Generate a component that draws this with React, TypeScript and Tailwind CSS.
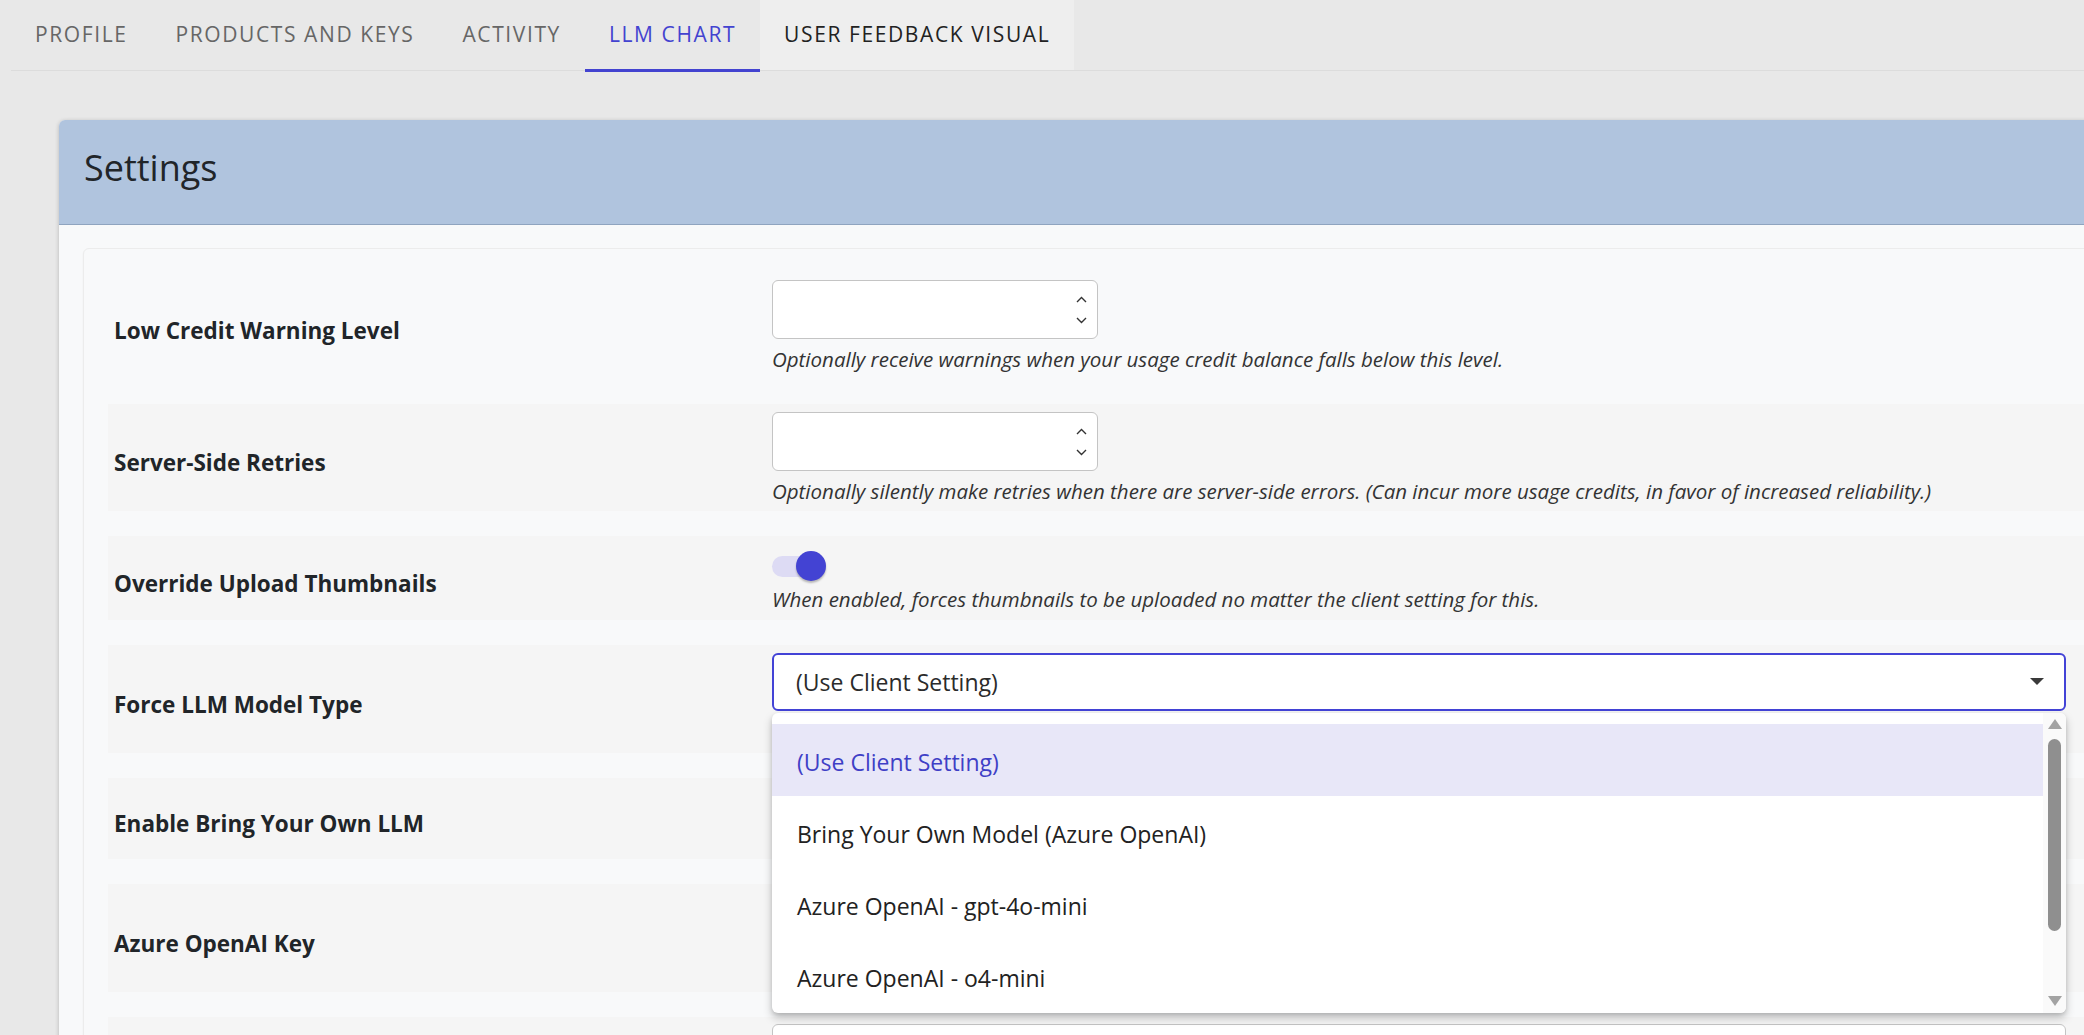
import React from "react";

const TABS = ["Profile", "Products and Keys", "Activity", "LLM Chart", "User Feedback Visual"];
const ACTIVE_TAB = "LLM Chart";
const HOVER_TAB = "User Feedback Visual";

const MODEL_OPTIONS = [
  "(Use Client Setting)",
  "Bring Your Own Model (Azure OpenAI)",
  "Azure OpenAI - gpt-4o-mini",
  "Azure OpenAI - o4-mini",
];

function Spinner() {
  return (
    <div className="absolute right-[10px] top-0 flex h-full flex-col items-center justify-center gap-[14px]">
      <svg width="11" height="7" viewBox="0 0 11 7" fill="none">
        <polyline points="1,6 5.5,1.5 10,6" stroke="#333" strokeWidth="1.4" />
      </svg>
      <svg width="11" height="7" viewBox="0 0 11 7" fill="none">
        <polyline points="1,1 5.5,5.5 10,1" stroke="#333" strokeWidth="1.4" />
      </svg>
    </div>
  );
}

function NumberInput() {
  return (
    <div className="relative h-[59px] w-[326px] rounded-[6px] border border-[#c4c4c4] bg-white">
      <Spinner />
    </div>
  );
}

function Toggle() {
  return (
    <div className="relative h-[30px] w-[54px]">
      <div className="absolute left-0 top-[4.5px] h-[21px] w-[51px] rounded-full bg-[#dddbf4]" />
      <div className="absolute right-0 top-0 size-[30px] rounded-full bg-[#4343d3] shadow-[0_2px_2px_rgba(0,0,0,0.25)]" />
    </div>
  );
}

function Helper({ children, className = "" }: { children: React.ReactNode; className?: string }) {
  return (
    <p className={`text-[20.5px] italic leading-[27px] text-[#333] ${className}`}>{children}</p>
  );
}

function Row({
  label,
  height,
  shaded = true,
  children,
}: {
  label: string;
  height: string;
  shaded?: boolean;
  children?: React.ReactNode;
}) {
  return (
    <div className={`flex ${height} ${shaded ? "bg-[#f5f5f5]" : ""}`}>
      <div className="flex w-[664px] shrink-0 items-center pl-[6px] pt-[11px] text-[22.5px] font-bold text-[#212529]">
        {label}
      </div>
      <div className="w-[1294px] shrink-0">{children}</div>
    </div>
  );
}

function ModelSelect() {
  return (
    <div className="relative">
      <div className="flex h-[58px] items-center rounded-[6px] border-2 border-[#4343d6] bg-white pl-[22px] text-[23px] text-[#2b2b2b]">
        (Use Client Setting)
        <svg className="absolute right-[22px] top-[25px]" width="14" height="7" viewBox="0 0 14 7">
          <polygon points="0,0 14,0 7,7" fill="#3a3a3a" />
        </svg>
      </div>

      <div className="absolute left-0 top-[60px] z-10 flex h-[300px] w-full overflow-hidden rounded-[6px] bg-white shadow-[0_5px_10px_rgba(0,0,0,0.22),0_2px_4px_rgba(0,0,0,0.12)]">
        <ul className="flex-1 pt-[11px]">
          {MODEL_OPTIONS.map((option, i) => (
            <li
              key={option}
              className={`flex h-[72px] items-center pl-[25px] pt-[4px] text-[23px] ${
                i === 0 ? "bg-[#e8e7f8] text-[#3f3fc6]" : "text-[#222]"
              }`}
            >
              {option}
            </li>
          ))}
        </ul>
        <div className="flex w-[23px] flex-col items-center bg-[#fafafa] pt-[6px]">
          <svg width="14" height="10" viewBox="0 0 14 10">
            <polygon points="7,0 14,10 0,10" fill="#a3a3a3" />
          </svg>
          <div className="mt-[10px] h-[192px] w-[13px] rounded-full bg-[#8f8f8f]" />
          <svg className="mt-[65px]" width="14" height="10" viewBox="0 0 14 10">
            <polygon points="0,0 14,0 7,10" fill="#a3a3a3" />
          </svg>
        </div>
      </div>
    </div>
  );
}

export default function App() {
  return (
    <div className="h-[1035px] w-[2084px] overflow-hidden bg-[#e8e8e8] font-['Open_Sans','Noto_Sans',sans-serif]">
      <nav className="ml-[11px] flex h-[71px] border-b border-[#dcdcdc]">
        {TABS.map((tab) => (
          <div
            key={tab}
            className={`relative flex h-[70px] items-center px-[24px] text-[21px] font-medium uppercase tracking-[1.6px] ${
              tab === ACTIVE_TAB
                ? "text-[#4343d0]"
                : tab === HOVER_TAB
                  ? "bg-[#eeeeee] text-[#222]"
                  : "text-[#666]"
            }`}
          >
            {tab}
            {tab === ACTIVE_TAB && (
              <span className="absolute bottom-[-2px] left-0 h-[3px] w-full bg-[#4343d0]" />
            )}
          </div>
        ))}
      </nav>

      <div className="ml-[59px] mt-[49px] w-[2100px] rounded-[6px] bg-[#f8f9fa] shadow-[0_1px_4px_rgba(0,0,0,0.22)]">
        <div className="flex h-[105px] items-center rounded-t-[6px] border-b border-[#8fa4bf] bg-[#b0c4de] pb-[8px] pl-[25px] text-[36px] text-[#212529]">
          Settings
        </div>

        <div className="px-[24px] pt-[23px]">
          <div className="flex flex-col gap-[25px] rounded-[6px] border border-[#ececec] bg-[#f8f9fa] pl-[24px] pt-[23px] shadow-[0_1px_2px_rgba(0,0,0,0.06)]">
            <Row label="Low Credit Warning Level" height="h-[107px]" shaded={false}>
              <div className="pt-[8px]">
                <NumberInput />
                <Helper className="mt-[7px]">
                  Optionally receive warnings when your usage credit balance falls below this level.
                </Helper>
              </div>
            </Row>

            <Row label="Server-Side Retries" height="h-[107px]">
              <div className="pt-[8px]">
                <NumberInput />
                <Helper className="mt-[7px]">
                  Optionally silently make retries when there are server-side errors. (Can incur more
                  usage credits, in favor of increased reliability.)
                </Helper>
              </div>
            </Row>

            <Row label="Override Upload Thumbnails" height="h-[84px]">
              <div className="pt-[15px]">
                <Toggle />
                <Helper className="mt-[5px]">
                  When enabled, forces thumbnails to be uploaded no matter the client setting for this.
                </Helper>
              </div>
            </Row>

            <Row label="Force LLM Model Type" height="h-[108px]">
              <div className="pt-[8px]">
                <ModelSelect />
              </div>
            </Row>

            <Row label="Enable Bring Your Own LLM" height="h-[81px]">
              <div className="pt-[13px]">
                <Toggle />
              </div>
            </Row>

            <Row label="Azure OpenAI Key" height="h-[108px]">
              <div className="pt-[7px]">
                <div className="h-[59px] w-full rounded-[6px] border border-[#c4c4c4] bg-white" />
              </div>
            </Row>

            <Row label="" height="h-[108px]">
              <div className="pt-[7px]">
                <div className="h-[59px] w-full rounded-[6px] border border-[#c4c4c4] bg-white" />
              </div>
            </Row>
          </div>
        </div>
      </div>
    </div>
  );
}
